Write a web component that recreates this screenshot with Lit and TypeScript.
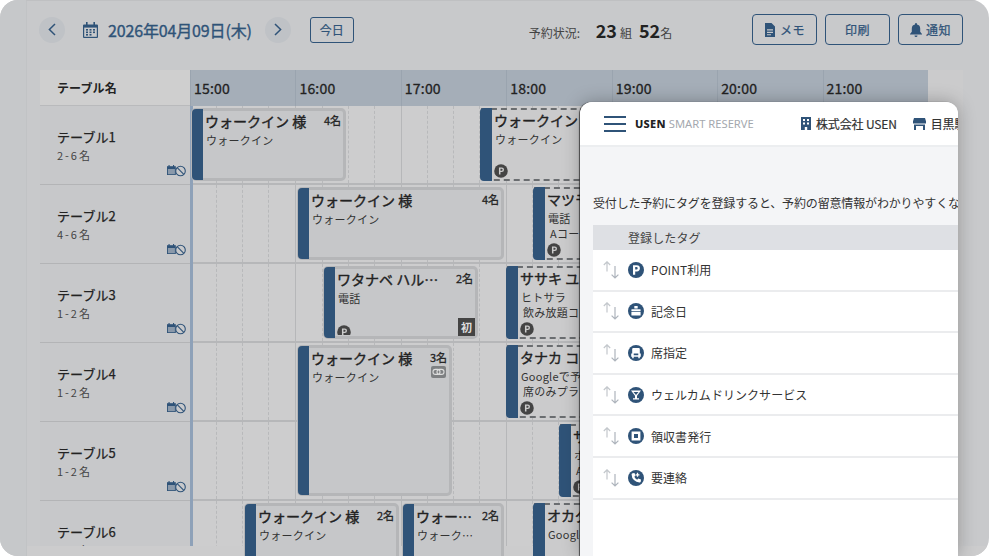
import { LitElement, html, css, svg } from "lit";
import { customElement } from "lit/decorators.js";

const NAVY = "#2f5378";

type Res = { x: number; w: number; h?: number; name: string; ppl?: string; sub?: string; sub2?: string; dashed?: boolean; p?: boolean; first?: boolean; link?: boolean };

const rows: { name: string; cap: string; res: Res[] }[] = [
  { name: "テーブル1", cap: "2 - 6 名", res: [
    { x: 1, w: 155, name: "ウォークイン 様", ppl: "4名", sub: "ウォークイン" },
    { x: 291, w: 300, dashed: true, name: "ウォークイン 様", sub: "ウォークイン", p: true },
  ] },
  { name: "テーブル2", cap: "4 - 6 名", res: [
    { x: 107, w: 207, name: "ウォークイン 様", ppl: "4名", sub: "ウォークイン" },
    { x: 344, w: 300, dashed: true, name: "マツモト 様", sub: "電話", sub2: "Aコース", p: true },
  ] },
  { name: "テーブル3", cap: "1 - 2 名", res: [
    { x: 133, w: 155, name: "ワタナベ ハル…", ppl: "2名", sub: "電話", p: true, first: true },
    { x: 317, w: 300, dashed: true, name: "ササキ ユウ 様", sub: "ヒトサラ", sub2: "飲み放題コース", p: true },
  ] },
  { name: "テーブル4", cap: "1 - 2 名", res: [
    { x: 107, w: 155, h: 151, name: "ウォークイン 様", ppl: "3名", sub: "ウォークイン", link: true },
    { x: 317, w: 300, dashed: true, name: "タナカ コウ 様", sub: "Googleで予約", sub2: "席のみプラン", p: true },
  ] },
  { name: "テーブル5", cap: "1 - 2 名", res: [
    { x: 370, w: 300, dashed: true, name: "サトウ 様", sub: "ホット", sub2: "Aコース", p: true },
  ] },
  { name: "テーブル6", cap: "1 - 2 名", res: [
    { x: 54, w: 155, name: "ウォークイン 様", ppl: "2名", sub: "ウォークイン" },
    { x: 212, w: 102, name: "ウォー…", ppl: "2名", sub: "ウォーク…" },
    { x: 344, w: 300, dashed: true, name: "オカダ 様", sub: "Google" },
  ] },
];

const hours = ["15:00", "16:00", "17:00", "18:00", "19:00", "20:00", "21:00"];

const tagIcon = (k: string) => {
  const w = "#fff";
  const inner: Record<string, unknown> = {
    p: svg`<path fill-rule="evenodd" d="M5 3.200h3.800a3 3 0 0 1 0 6.200H7.200v3.400H5zM7.200 5.100v2.400h1.300a1.200 1.200 0 0 0 0-2.400z" fill="${w}"/>`,
    cake: svg`<rect x="6.300" y="3" width="3.400" height="2.600" rx=".6" fill="${w}"/><rect x="3.400" y="6.200" width="9.200" height="2" rx=".5" fill="${w}"/><rect x="3.400" y="8.900" width="9.200" height="3.500" rx=".5" fill="${w}"/>`,
    seat: svg`<path fill-rule="evenodd" d="M5.200 3h5.600a1 1 0 0 1 1 1v4.400h1v3.400h-1v1.400h-1.500v-1.400H5.700v1.400H4.200v-1.400h-1V8.400h1V4a1 1 0 0 1 1-1zM5.700 8.400v1.900h4.600V8.400z" fill="${w}"/>`,
    drink: svg`<path fill-rule="evenodd" d="M3 3.600h10L9 8.800v2.400h2v1.300H5v-1.300h2V8.800zM5.500 4.900 8 7.900l2.500-3z" fill="${w}"/>`,
    rec: svg`<path fill-rule="evenodd" d="M3.600 3.600h8.800v8.800H3.600zM6 6v4h4V6z" fill="${w}"/>`,
    tel: svg`<path d="M4.600 3.200 6.500 3l1 2.800-1.200 1a5.500 5.500 0 0 0 2.900 2.900l1-1.200 2.800 1-.2 1.900c-.1.700-.7 1.100-1.300 1A8 8 0 0 1 3.600 4.500c-.1-.6.300-1.200 1-1.300z" fill="${w}"/><path d="M9.500 2.800v4M7.600 4.800h3.800" stroke="${w}" stroke-width="1.300"/>`,
  };
  return html`<svg class="tag-ic" viewBox="0 0 16 16"><circle cx="8" cy="8" r="8" fill="${NAVY}"/>${inner[k]}</svg>`;
};

const sortIc = html`<svg class="sort" viewBox="0 0 16 18" fill="none" stroke-width="1.200"><path d="M4 10.500V.8M.8 4 4 .8 7.200 4" stroke="#c3c7cc"/><path d="M12 5v12M8.600 13.600l3.400 3.400 3.400-3.400" stroke="#aeb4bc"/></svg>`;

const noRes = html`<svg class="nores" viewBox="0 0 19 12"><rect x="0" y="1.200" width="8.800" height="8.800" fill="#2f5378"/><rect x="1.500" y="0" width="1.100" height="2" fill="#2f5378"/><rect x="6" y="0" width="1.100" height="2" fill="#2f5378"/><rect x=".9" y="4" width="7" height="5.200" fill="#8a99aa"/><circle cx="13.500" cy="6" r="4.800" fill="#c8c9cb" stroke="#2f5378" stroke-width="1.100"/><path d="M10.200 2.700l6.600 6.600" stroke="#2f5378" stroke-width="1.100"/></svg>`;

const pMark = html`<svg class="pmark" viewBox="0 0 13 13"><circle cx="6.500" cy="6.500" r="6.300" fill="#444"/><path d="M4.600 3.300h2.600a2.100 2.100 0 0 1 0 4.200H6v2.200H4.600z" fill="#ccc"/><path d="M6 4.500v1.800h1.100a.9.900 0 0 0 0-1.800z" fill="#444"/></svg>`;

@customElement("app-root")
export class AppRoot extends LitElement {
  static styles = css`
    :host { display: block; width: 989px; height: 556px; overflow: hidden; background: #fff; font-family: "Noto Sans CJK JP", "Noto Sans", sans-serif; color: #222; position: relative; }
    .frame { width: 989px; height: 556px; background: #c8c9cb; border-radius: 18px; overflow: hidden; box-sizing: border-box; padding: 14px 26px 0 40px; position: relative; display: flex; flex-direction: column; }
    .frame-top { position: absolute; left: 26px; right: 0; top: 0; height: 1px; background: #bfc0c2; }
    .frame-left { position: absolute; left: 0; top: 0; bottom: 0; width: 26px; border-right: 1px solid #c1c3c5; background: #c6c8ca; }
    .frame-bottom { position: absolute; left: 27px; right: 0; bottom: 0; height: 10px; background: #cccccd; z-index: 3; }

    .toolbar { display: flex; align-items: center; height: 31px; flex: none; position: relative; }
    .circ { width: 26px; height: 26px; border-radius: 50%; background: #bfc2c6; display: flex; align-items: center; justify-content: center; flex: none; margin-left: -1px; }
    .circ svg { width: 8px; height: 13px; }
    .cal { width: 15px; height: 16px; margin: 0 10px 0 18px; flex: none; }
    .date { font-size: 16px; font-weight: 400; -webkit-text-stroke: .35px #2f5378; color: #2f5378; width: 148px; white-space: nowrap; letter-spacing: -.15px; }
    .next { margin-left: 10px; }
    .today { margin-left: 19px; width: 44px; height: 26px; box-sizing: border-box; border: 1px solid #2f5378; border-radius: 3px; font-size: 12px; color: #2f5378; -webkit-text-stroke: .2px #2f5378; display: flex; align-items: center; justify-content: center; }
    .stat { margin-left: 175px; display: flex; align-items: baseline; white-space: nowrap; color: #444; font-size: 12px; width: 225px; }
    .stat b { font-size: 18px; color: #222; font-weight: 700; }
    .stat .l { width: 67px; }
    .stat .u { margin: 0 7px 0 3px; }
    .btns { display: flex; gap: 8px; }
    .btn { width: 65px; height: 31px; box-sizing: border-box; border: 1px solid #2f5378; border-radius: 4px; color: #2f5378; font-size: 12px; -webkit-text-stroke: .25px #2f5378; letter-spacing: .4px; display: flex; align-items: center; justify-content: center; gap: 4px; }
    .btn svg { width: 12px; height: 14px; }

    .table { margin-top: 25px; width: 923px; flex: none; background: #cbcbcc; position: relative; }
    .thead { display: flex; height: 36px; width: 888px; }
    .th-name { width: 150px; flex: none; background: #cfcfcf; font-size: 12px; font-weight: 700; padding-left: 17px; box-sizing: border-box; display: flex; align-items: center; letter-spacing: .1px; border-bottom: 1px solid #b9babc; }
    .th-time { flex: 1; display: grid; grid-template-columns: repeat(7, 1fr); background: #a5aeb8; }
    .th-h { font-size: 14px; -webkit-text-stroke: .3px #222; padding-left: 3px; display: flex; align-items: center; border-left: 1px solid #9aa4af; letter-spacing: .2px; }
    .tr { display: flex; height: 79px; width: 888px; position: relative; box-sizing: border-box; }
    .td-name { width: 150px; flex: none; background: #c7c8ca; box-sizing: border-box; padding: 21px 0 0 17px; border-bottom: 1px solid #b3b4b6; position: relative; }
    .nm { font-size: 13px; -webkit-text-stroke: .25px #222; line-height: 20px; letter-spacing: .1px; }
    .cp { font-size: 11px; color: #444; line-height: 16px; word-spacing: -.5px; }
    .nores { position: absolute; right: 4px; bottom: 7px; width: 19px; height: 12px; }
    .td-time { flex: 1; display: grid; grid-template-columns: repeat(7, 1fr); background: #cdcdce; border-bottom: 2px solid #b6b7b9; position: relative; }
    .hr { display: grid; grid-template-columns: repeat(4, 1fr); border-left: 1px solid #b6b7b9; }
    .hr i { border-right: 1px dashed #b8b9bb; }
    .hr i:last-child { border-right: none; }

    .card { position: absolute; top: 2px; height: 73px; box-sizing: border-box; border-radius: 5px; background: #c6c7c9; border: 3px solid #b5b6b8; z-index: 3; display: block; }
    .card.dash { background: #cbcbcc; border: 2px dashed #6a6d70; border-left-width: 0; border-radius: 0 4px 4px 0; }
    .bar { position: absolute; left: -2px; top: -2px; bottom: -2px; width: 11px; background: #2f5378; border-radius: 4px 0 0 4px; }
    .dash .bar { left: -1px; width: 12px; }
    .ttl { position: absolute; left: 11px; top: 0; font-size: 14px; -webkit-text-stroke: .4px #222; white-space: nowrap; line-height: 20px; }
    .ppl { position: absolute; right: 2px; top: 1px; font-size: 11px; -webkit-text-stroke: .3px #222; line-height: 16px; }
    .sub { position: absolute; left: 12px; top: 21px; font-size: 11px; letter-spacing: .25px; white-space: nowrap; line-height: 16px; color: #333; }
    .sub2 { position: absolute; left: 14px; top: 36px; font-size: 11px; letter-spacing: .25px; white-space: nowrap; line-height: 16px; color: #333; }
    .dash .ttl { left: 13px; }
    .dash .sub { left: 14px; }
    .dash .sub2 { left: 16px; }
    .pmark { position: absolute; left: 11px; bottom: -3px; width: 14px; height: 14px; clip-path: inset(0 0 4px 0); }
    .dash .pmark { bottom: 1px; left: 13px; clip-path: none; }
    .first { position: absolute; right: 0; bottom: 0; width: 17px; height: 18px; background: #444; color: #ddd; font-size: 11px; font-weight: 700; display: flex; align-items: center; justify-content: center; }
    .link { position: absolute; right: 3px; top: 18px; width: 15px; height: 12px; background: #7e8082; border-radius: 2px; }
    .link svg { display: block; }
    .now { position: absolute; left: 150px; top: 36px; bottom: 0; width: 3px; background: #8ea1b8; z-index: 2; }

    .panel { position: absolute; left: 580px; top: 102px; width: 378px; height: 454px; background: #f4f5f7; border-radius: 12px 12px 0 0; box-shadow: 0 0 18px rgba(0,0,0,.28), -1px 0 1px rgba(0,0,0,.6); z-index: 4; overflow: hidden; display: flex; flex-direction: column; }
    .p-head { height: 43px; flex: none; background: #fff; border-bottom: 2px solid #eceef0; display: flex; align-items: center; white-space: nowrap; }
    .burger { width: 22px; margin-left: 24px; display: flex; flex-direction: column; gap: 5px; flex: none; }
    .burger i { height: 2px; background: #2f5378; display: block; }
    .logo { font-size: 11.200px; margin-left: 9px; width: 166px; flex: none; color: #a4a8ae; font-family: "Noto Sans", sans-serif; font-weight: 400; }
    .logo b { color: #222; font-weight: 800; font-size: 11px; letter-spacing: .3px; }
    .co { display: flex; align-items: center; gap: 5px; font-size: 12px; -webkit-text-stroke: .2px #333; color: #333; flex: none; letter-spacing: -.15px; }
    .co svg { width: 10px; height: 13px; flex: none; }
    .co.st { margin-left: 16px; }
    .co.st svg { width: 13px; height: 12px; }
    .lead { font-size: 12px; color: #333; margin: 47px 0 0 13px; line-height: 18px; white-space: nowrap; letter-spacing: -.15px; height: 18px; }
    .tags { margin: 13px 0 0 13px; flex: 1; background: #fff; min-height: 0; }
    .tags-h { height: 25px; background: #dee0e4; font-size: 12px; color: #444; padding-left: 35px; display: flex; align-items: center; letter-spacing: .1px; }
    .tag { height: 41.600px; box-sizing: border-box; border-bottom: 2px solid #ebecee; display: flex; align-items: center; font-size: 12px; color: #333; letter-spacing: .05px; }
    .sort { width: 16px; height: 18px; margin-left: 10px; flex: none; }
    .tag-ic { width: 16px; height: 16px; margin-left: 9px; flex: none; }
    .tag span { margin-left: 7px; }
  `;

  card(r: Res) {
    const st = `left:${r.x}px;width:${r.w}px;${r.h ? `height:${r.h}px;` : ""}`;
    return html`<div class="card ${r.dashed ? "dash" : ""}" style=${st}>
      <div class="bar"></div>
      <div class="ttl">${r.name}</div>
      ${r.ppl ? html`<div class="ppl">${r.ppl}</div>` : ""}
      ${r.sub ? html`<div class="sub">${r.sub}</div>` : ""}
      ${r.sub2 ? html`<div class="sub2">${r.sub2}</div>` : ""}
      ${r.p ? pMark : ""}
      ${r.first ? html`<div class="first">初</div>` : ""}
      ${r.link ? html`<div class="link"><svg viewBox="0 0 15 12" width="15" height="12" fill="none" stroke="#ddd" stroke-width="1.100"><rect x="2" y="3.400" width="7" height="5" rx="2.400"/><rect x="6" y="3.400" width="7" height="5" rx="2.400"/></svg></div>` : ""}
    </div>`;
  }

  render() {
    return html`<div class="frame">
      <div class="frame-left"></div><div class="frame-top"></div><div class="frame-bottom"></div>
      <div class="toolbar">
        <div class="circ"><svg viewBox="0 0 8 13" fill="none" stroke="${NAVY}" stroke-width="1.500"><path d="M7 1 1.400 6.500 7 12"/></svg></div>
        <svg class="cal" viewBox="0 0 15 16"><path d="M1 2.500h13a1 1 0 0 1 1 1V15a1 1 0 0 1-1 1H1a1 1 0 0 1-1-1V3.500a1 1 0 0 1 1-1z" fill="${NAVY}"/><rect x="3" y="0" width="1.600" height="3" fill="${NAVY}"/><rect x="10.400" y="0" width="1.600" height="3" fill="${NAVY}"/><rect x="1.200" y="5.600" width="12.600" height="9.200" fill="#c8c9cb"/><g fill="${NAVY}"><rect x="3" y="7" width="2" height="1.600"/><rect x="6.500" y="7" width="2" height="1.600"/><rect x="10" y="7" width="2" height="1.600"/><rect x="3" y="9.500" width="2" height="1.600"/><rect x="6.500" y="9.500" width="2" height="1.600"/><rect x="10" y="9.500" width="2" height="1.600"/><rect x="3" y="12" width="2" height="1.600"/><rect x="6.500" y="12" width="2" height="1.600"/></g></svg>
        <div class="date">2026年04月09日(木)</div>
        <div class="circ next"><svg viewBox="0 0 8 13" fill="none" stroke="${NAVY}" stroke-width="1.500"><path d="M1 1l5.600 5.500L1 12"/></svg></div>
        <div class="today">今日</div>
        <div class="stat"><span class="l">予約状況:</span><b>23</b><span class="u">組</span><b>52</b><span>名</span></div>
        <div class="btns">
          <div class="btn"><svg viewBox="0 0 12 14"><path fill-rule="evenodd" d="M1 0h6.500L11 3.500V14H1zM3 6.200v1.200h6V6.200zM3 8.800V10h6V8.800zM3 11.200v1h4v-1z" fill="${NAVY}"/></svg>メモ</div>
          <div class="btn">印刷</div>
          <div class="btn"><svg viewBox="0 0 12 14"><path d="M6 0a1 1 0 0 1 1 1v.6A4 4 0 0 1 10.200 5.500v3.300L12 11v.6H0V11l1.800-2.200V5.500A4 4 0 0 1 5 1.600V1a1 1 0 0 1 1-1zM4.500 12.400h3a1.500 1.500 0 0 1-3 0z" fill="${NAVY}"/></svg>通知</div>
        </div>
      </div>

      <div class="table">
        <div class="thead">
          <div class="th-name">テーブル名</div>
          <div class="th-time">${hours.map((h) => html`<div class="th-h">${h}</div>`)}</div>
        </div>
        ${rows.map((r) => html`<div class="tr">
          <div class="td-name"><div class="nm">${r.name}</div><div class="cp">${r.cap}</div>${noRes}</div>
          <div class="td-time">
            ${hours.map(() => html`<div class="hr"><i></i><i></i><i></i><i></i></div>`)}
            ${r.res.map((c) => this.card(c))}
          </div>
        </div>`)}
        <div class="now"></div>
      </div>

      <div class="panel">
        <div class="p-head">
          <div class="burger"><i></i><i></i><i></i></div>
          <div class="logo"><b>USEN</b> SMART RESERVE</div>
          <div class="co"><svg viewBox="0 0 10 13"><path fill-rule="evenodd" d="M0 0h10v13H6.200V10H3.800v3H0zM2 2v2h2V2zM6 2v2h2V2zM2 5.500v2h2v-2zM6 5.500v2h2v-2z" fill="${NAVY}"/></svg>株式会社 USEN</div>
          <div class="co st"><svg viewBox="0 0 13 12"><path fill-rule="evenodd" d="M1 0h11l1 3.200V5.500H0V3.200zM1 6.500h11V12h-2V8H3v4H1z" fill="${NAVY}"/></svg>目黒駅前店</div>
        </div>
        <div class="lead">受付した予約にタグを登録すると、予約の留意情報がわかりやすくなります。</div>
        <div class="tags">
          <div class="tags-h">登録したタグ</div>
          ${[["p","POINT利用"],["cake","記念日"],["seat","席指定"],["drink","ウェルカムドリンクサービス"],["rec","領収書発行"],["tel","要連絡"]].map(([k,t]) => html`<div class="tag">${sortIc}${tagIcon(k)}<span>${t}</span></div>`)}
        </div>
      </div>
    </div>`;
  }
}
